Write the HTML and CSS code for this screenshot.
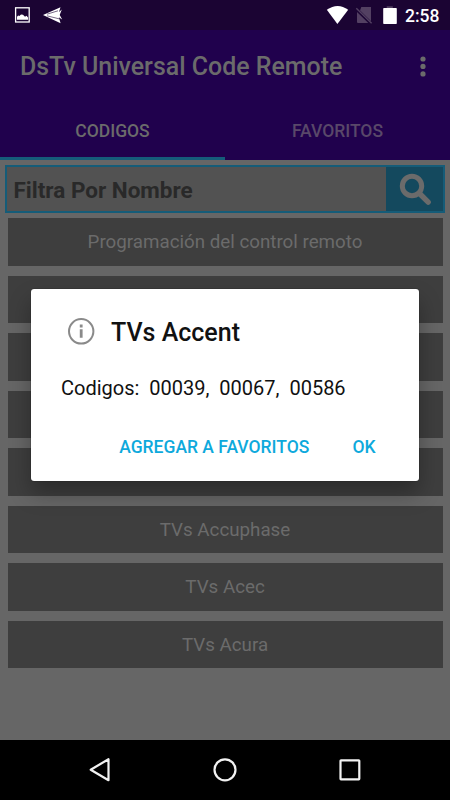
FILE: index.html
```html
<!DOCTYPE html>
<html lang="es">
<head>
<meta charset="utf-8">
<title>DsTv Universal Code Remote</title>
<link rel="stylesheet" href="styles.css">
</head>
<body>
<div class="screen">
  <div class="status">
    <svg class="status-left" width="80" height="30" viewBox="0 0 80 30">
      <rect x="15.6" y="7.8" width="13.6" height="14.2" fill="none" stroke="#fff" stroke-width="1.3"/>
      <path d="M17 19.8v-3l1.2-1.2 1.2.4 1.6-1.5 2 .3 2 2 1.5-1 1.5 1.6v2.4z" fill="#fff"/>
      <path d="M43 15 60.5 7.2 59 12l2.8-2.4-2.1 5.3 2.5 4.5-3.4-2.2 1.8 6z" fill="#fff"/>
      <path d="M47 14.2 58 10.8M47 15.8l12 3" stroke="#1b0433" stroke-width=".6"/>
    </svg>
    <svg width="78" height="30" viewBox="0 0 78 30">
      <path d="M.8 9.8Q11.8 2 22.2 9.8L11.4 24z" fill="#fff"/>
      <path d="M35.3 7H45v14.3L34 10.4zM31 12l11.3 11H32q-1 0-1-1z" fill="#534062"/>
      <path d="m30.3 8.3 15.3 15" stroke="#534062" stroke-width="1.4"/>
      <path d="M60.7 6.2h6.1v2h-6.1z" fill="#534062"/>
      <path d="M58 8h12q.8 0 .8.8v14.4q0 .8-.8.8H58q-.8 0-.8-.8V8.8q0-.8.8-.8z" fill="#fff"/>
    </svg>
    <span class="clock">2:58</span>
  </div>
  <header class="appbar">
    <div class="toolbar">
      <h1 class="app-title">DsTv Universal Code Remote</h1>
      <svg width="6" height="22" viewBox="0 0 6 22" fill="#6b6b6b"><circle cx="3" cy="3" r="2.6"/><circle cx="3" cy="10.4" r="2.6"/><circle cx="3" cy="17.9" r="2.6"/></svg>
    </div>
    <nav class="tabs">
      <span class="tab tab-active">CODIGOS</span>
      <span class="tab">FAVORITOS</span>
    </nav>
  </header>
  <main class="content">
    <div class="search">
      <span class="search-text">Filtra Por Nombre</span>
      <span class="search-button"><svg width="34" height="34" viewBox="0 0 34 34" fill="none" stroke="#6b6b6b"><circle cx="13" cy="13" r="9.7" stroke-width="5"/><path d="m20.5 20.5 8.7 8.7" stroke-width="5.4" stroke-linecap="round"/></svg></span>
    </div>
    <div class="list">
      <div class="row">Programación del control remoto</div>
      <div class="row"></div>
      <div class="row"></div>
      <div class="row"></div>
      <div class="row"></div>
      <div class="row">TVs Accuphase</div>
      <div class="row">TVs Acec</div>
      <div class="row">TVs Acura</div>
    </div>
  </main>
  <footer class="navbar">
    <svg width="26" height="26" viewBox="0 0 26 26"><path d="M21.5 2.2v21L3.7 12.7z"/></svg>
    <svg width="26" height="26" viewBox="0 0 26 26"><circle cx="13" cy="12.8" r="10.5"/></svg>
    <svg width="26" height="26" viewBox="0 0 26 26"><rect x="3.5" y="3.3" width="18.8" height="19" rx=".5"/></svg>
  </footer>
  <section class="dialog">
    <div class="dialog-head">
      <svg width="28" height="28" viewBox="0 0 28 28"><circle cx="14.2" cy="13.3" r="12.2" fill="none" stroke="#8a8a8a" stroke-width="2"/><path d="M12.8 6.6h2.8v2.8h-2.8zM12.8 11.3h2.8v8.4h-2.8z" fill="#8a8a8a"/></svg>
      <h2 class="dialog-title">TVs Accent</h2>
    </div>
    <p class="dialog-text">Codigos:&nbsp; 00039,&nbsp; 00067,&nbsp; 00586</p>
    <div class="actions"><span class="action">AGREGAR A FAVORITOS</span><span class="action">OK</span></div>
  </section>
</div>
</body>
</html>
```
FILE: styles.css
```css
* { box-sizing: border-box; }
body { margin: 0; font-family: Roboto, "Liberation Sans", sans-serif; }
h1, h2, p { margin: 0; }
svg { display: block; flex: none; }
.screen { position: relative; width: 450px; height: 800px; display: flex; flex-direction: column; background: #666; overflow: hidden; }
.status { height: 30px; flex: none; display: flex; background: #1b0433; color: #fff; }
.status-left { margin-right: auto; }
.clock { width: 45px; margin-left: 1px; font-size: 17.5px; font-weight: 500; line-height: 32px; white-space: nowrap; }
.appbar { height: 130px; flex: none; background: #20014d; color: #6b6b6b; }
.toolbar { height: 70px; padding: 3px 24.5px 0 20px; display: flex; align-items: center; justify-content: space-between; }
.app-title { font-size: 24.95px; font-weight: 500; line-height: 31px; white-space: nowrap; }
.tabs { display: grid; grid-template-columns: 1fr 1fr; height: 60px; }
.tab { text-align: center; font-size: 17.5px; font-weight: 500; line-height: 63px; height: 60px; color: #594869; }
.tab-active { color: #6b6b6b; border-bottom: 3px solid #155c7a; }
.content { flex: 1; padding-top: 5px; }
.search { display: flex; width: 440px; height: 48px; margin-left: 5px; background: #525252; border: 2px solid #155c78; }
.search-text { flex: 1; padding-left: 6.5px; font-size: 22.5px; font-weight: 700; line-height: 46px; color: #292929; white-space: nowrap; }
.search-button { width: 57px; background: #14495e; padding: 6px 0 0 13px; }
.list { display: flex; flex-direction: column; gap: 10px; padding: 5px 7.5px 0; }
.row { height: 47.5px; background: #3e3e3e; color: #6b6b6b; text-align: center; font-size: 18.75px; line-height: 49px; }
.navbar { height: 60px; flex: none; background: #000; display: flex; align-items: center; justify-content: center; gap: 99px; }
.navbar svg { fill: none; stroke: #f2f2f2; stroke-width: 2.2; stroke-linejoin: round; }
.dialog { position: absolute; left: 31px; top: 289px; width: 388px; height: 192px; background: #fff; border-radius: 3px; box-shadow: 0 0 1px #000, 0 12px 22px rgba(0, 0, 0, .3); padding: 28px 35px 0 30px; }
.dialog-head { display: flex; align-items: center; gap: 16px; padding-left: 6px; height: 30px; }
.dialog-title { padding-top: 2px; font-size: 25px; font-weight: 500; line-height: 30px; color: #111; }
.dialog-text { margin-top: 29px; font-size: 20px; line-height: 24px; color: #111; white-space: nowrap; }
.actions { display: flex; justify-content: flex-end; gap: 43px; margin: 36px 8.5px 0 0; }
.action { font-size: 17.5px; font-weight: 500; line-height: 22px; color: #0ea9dc; white-space: nowrap; }
```
